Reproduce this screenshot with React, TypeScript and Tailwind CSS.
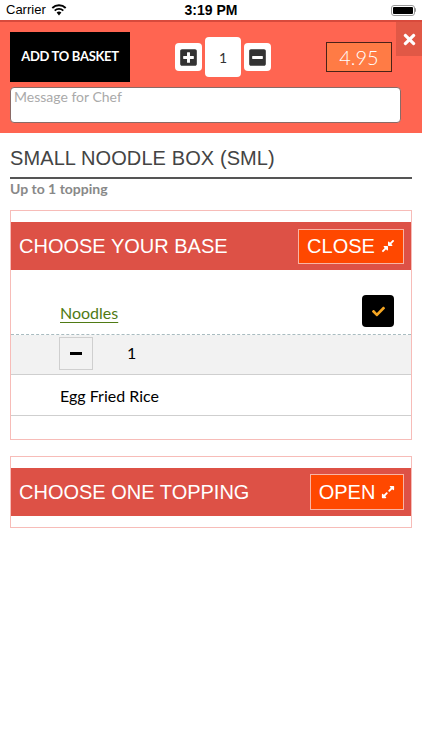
import React from "react";
import { FaPlusSquare, FaMinusSquare, FaTimes, FaCheck, FaCompressAlt, FaExpandAlt } from "react-icons/fa";

const lato = { fontFamily: "Lato, 'Noto Sans', sans-serif" };
const helv = { fontFamily: "'Liberation Sans', Arial, sans-serif" };

function Wifi() {
  return (
    <svg width="16" height="12" viewBox="0 0 16 12">
      <path d="M8 11.5 L5.6 8.6 A3.6 3.6 0 0 1 10.4 8.6 Z" fill="#000" />
      <path d="M3.7 6.6 A6.2 6.2 0 0 1 12.3 6.6" stroke="#000" strokeWidth="1.9" fill="none" />
      <path d="M1.3 4 A9.6 9.6 0 0 1 14.7 4" stroke="#000" strokeWidth="1.9" fill="none" />
    </svg>
  );
}

export default function App() {
  return (
    <div className="w-[422px] h-[750px] bg-white overflow-hidden relative" style={lato}>
      {/* status bar */}
      <div className="h-[20px] flex items-center justify-between px-[6px] text-[13px] text-black relative" style={helv}>
        <div className="flex items-center gap-[5px]">
          <span>Carrier</span>
          <Wifi />
        </div>
        <div className="absolute left-0 right-0 text-center font-semibold text-[14px]">3:19 PM</div>
        <div className="flex items-center">
          <div className="w-[24px] h-[11px] border border-[#999] rounded-[3px] p-[1px]">
            <div className="w-full h-full bg-black rounded-[1px]" />
          </div>
          <div className="w-[1.5px] h-[4px] bg-[#999] rounded-r-sm" />
        </div>
      </div>

      {/* header */}
      <div className="bg-[#ff6551] border-t-[2px] border-[#d84a3c] relative px-[10px] pt-[10px] pb-[10px]">
        <div className="absolute top-0 right-0 w-[26px] h-[34px] bg-[#e15846] flex items-center justify-center text-white">
          <FaTimes size={17} />
        </div>
        <div className="flex items-center h-[50px]">
          <div className="w-[120px] h-[50px] bg-black text-white flex items-center justify-center font-bold text-[13px] tracking-[-0.3px]">
            ADD TO BASKET
          </div>
          <div className="ml-[45px] flex items-center gap-[3px]">
            <div className="w-[27px] h-[28px] bg-white rounded-[4px] flex items-center justify-center text-[#333]">
              <FaPlusSquare size={19} />
            </div>
            <div className="w-[36px] h-[40px] bg-white rounded-[4px] flex items-center justify-center text-[14px] text-[#333]">
              1
            </div>
            <div className="w-[27px] h-[28px] bg-white rounded-[4px] flex items-center justify-center text-[#333]">
              <FaMinusSquare size={19} />
            </div>
          </div>
          <div className="ml-[55px] w-[66px] h-[30px] bg-[#ff7b45] border border-[#4a2218] flex items-center justify-center text-white text-[20px] font-light">
            4.95
          </div>
        </div>
        <div className="mt-[5px] w-[391px] h-[36px] bg-white rounded-[4px] border border-[#8a6a66] px-[3px] text-[14px] text-[#aaa] leading-[18px]">
          Message for Chef
        </div>
      </div>

      {/* title */}
      <div className="mx-[10px] mt-[13px] pb-[7px] border-b-2 border-[#555] text-[20px] leading-[24px] text-[#444] tracking-[0.1px]" style={helv}>
        SMALL NOODLE BOX (SML)
      </div>
      <div className="mx-[10px] mt-[2px] text-[14px] leading-[16px] font-bold text-[#888]">Up to 1 topping</div>

      {/* section 1 */}
      <div className="mx-[10px] mt-[13px] border border-[#f7bcb8] pt-[11px] pb-[23px]">
        <div className="h-[48px] bg-[#dd5146] flex items-center justify-between pl-[8px] pr-[7px]" style={helv}>
          <span className="text-white text-[20px]">CHOOSE YOUR BASE</span>
          <div className="h-[35px] w-[106px] bg-[#ff4800] border border-[#f9b4a4] flex items-center justify-center gap-[6px] text-white text-[20px]">
            <span>CLOSE</span>
            <FaCompressAlt size={14} />
          </div>
        </div>
        <div className="flex items-center justify-between pl-[49px] pr-[17px] pt-[25px] pb-[7px] border-b border-dashed border-[#a9bcc0]">
          <span className="text-[16px] text-[#4f7a14] underline underline-offset-[3px] mt-[3px]">Noodles</span>
          <div className="w-[32px] h-[32px] bg-black rounded-[4px] flex items-center justify-center text-[#f5a623]">
            <FaCheck size={13} />
          </div>
        </div>
        <div className="h-[40px] bg-[#f2f2f2] border-b border-[#cfcfcf] flex items-start pl-[48px] pt-[2px]">
          <div className="w-[34px] h-[33px] border border-[#cfcfcf] bg-[#f2f2f2] flex items-center justify-center">
            <div className="w-[12px] h-[3px] bg-black" />
          </div>
          <span className="ml-[34px] text-[16px] text-black mt-[4px]">1</span>
        </div>
        <div className="h-[41px] border-b border-[#cfcfcf] flex items-center pl-[49px] pt-[2px] text-[16px] text-black">
          Egg Fried Rice
        </div>
      </div>

      {/* section 2 */}
      <div className="mx-[10px] mt-[16px] border border-[#f7bcb8] py-[11px]">
        <div className="h-[48px] bg-[#dd5146] flex items-center justify-between pl-[8px] pr-[7px]" style={helv}>
          <span className="text-white text-[20px]">CHOOSE ONE TOPPING</span>
          <div className="h-[36px] w-[94px] bg-[#ff4800] border border-[#f9b4a4] flex items-center justify-center gap-[6px] text-white text-[20px]">
            <span>OPEN</span>
            <FaExpandAlt size={14} />
          </div>
        </div>
      </div>
    </div>
  );
}
